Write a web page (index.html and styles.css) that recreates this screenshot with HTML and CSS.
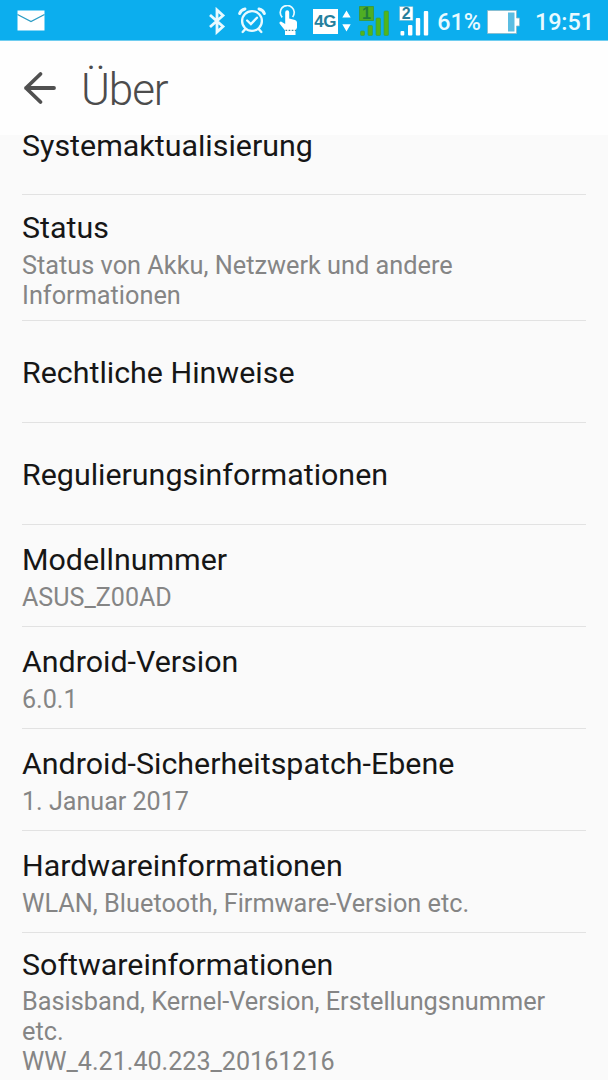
FILE: index.html
```html
<!DOCTYPE html>
<html lang="de">
<head>
  <meta charset="UTF-8">
  <title>Über</title>
  <link rel="stylesheet" href="styles.css">
</head>
<body>
  <div class="statusbar">
    <svg class="mail" width="28" height="21" viewBox="0 0 28 21">
      <path d="M0.5 0.5H27.5V20.5H0.5Z" fill="#fff"/>
      <path d="M0.5 4.5L14 11.5L27.5 4.5" fill="none" stroke="#2b9cc4" stroke-width="1.4"/>
    </svg>
    <div class="indicators">
      <svg class="bluetooth" width="18" height="28" viewBox="0 0 18 28">
        <path d="M2 8L15 19.5L9 25V3L15 8.5L2 20" fill="none" stroke="#e9faff" stroke-width="2.8"/>
      </svg>
      <svg class="alarm" width="28" height="27" viewBox="0 0 30 28">
        <g fill="none" stroke="#e9faff" stroke-width="2.5" stroke-linecap="round">
          <circle cx="15" cy="14.5" r="10.6"/>
          <path d="M9.8 14L13.8 17.8L20.3 11"/>
          <path d="M7.5 23.5L5 26.3M22.5 23.5L25 26.3"/>
          <path d="M1.8 6.5Q3 2.5 7.5 1.6M28.2 6.5Q27 2.5 22.5 1.6" stroke-width="3.2"/>
        </g>
      </svg>
      <svg class="touch" width="20" height="31" viewBox="0 0 20 31">
        <path d="M4.2 12.4A7 7 0 1 1 14.6 12" fill="none" stroke="#e9faff" stroke-width="1.7"/>
        <path d="M7.2 19V7.5Q7.2 5.3 9.2 5.3Q11.2 5.3 11.2 7.5V13.5L17 15Q19 15.6 19 17.6V22.5L17.5 26V30H7V25.5L1.5 18.5Q1 16.5 3 16.5L7.2 19Z" fill="#fff"/>
        <path d="M7.5 25.3H18" stroke="#438b9c" stroke-width="1.2" stroke-dasharray="1.7 1.4"/>
      </svg>
      <span class="network">4G</span>
      <svg class="updown" width="9" height="22" viewBox="0 0 9 22">
        <path d="M0.3 7.5L4.5 0.5L8.7 7.5ZM0.3 14.3H8.7L4.5 21.5Z" fill="#fff"/>
      </svg>
      <svg class="sim1" width="31" height="31" viewBox="0 0 31 31">
        <path d="M0.5 0.5H14.5V14.5H0.5Z" fill="#4fae23" stroke="#399b45"/>
        <text class="sim-no" x="7.5" y="13" fill="#227c3a">1</text>
        <g fill="#52b51a" stroke="#369f4a" stroke-width=".7">
          <rect x="1.5" y="25" width="4" height="4.5" rx="1"/>
          <rect x="9" y="19.5" width="4.5" height="10" rx="1"/>
          <rect x="17" y="12" width="4.5" height="17.5" rx="1"/>
          <rect x="25" y="5" width="4.5" height="24.5" rx="1"/>
        </g>
      </svg>
      <svg class="sim2" width="31" height="31" viewBox="0 0 31 31">
        <path d="M0.5 0.5H14V14.5H0.5Z" fill="#fff" stroke="#65b7d2" stroke-width=".6"/>
        <text class="sim-no" x="7.3" y="13" fill="#257f9d">2</text>
        <g fill="#fff">
          <rect x="1.5" y="25" width="3.8" height="4.5" rx="1"/>
          <rect x="9" y="19" width="4.4" height="10.5" rx="1"/>
          <rect x="16.8" y="12" width="4.4" height="17.5" rx="1"/>
          <rect x="24.8" y="5" width="4.4" height="24.5" rx="1"/>
        </g>
      </svg>
      <span class="percent">61%</span>
      <svg class="battery" width="34" height="24" viewBox="0 0 34 24">
        <path d="M0.5 0.5H29.5V8H32.5V16H29.5V23.5H0.5Z" fill="#fff" stroke="#8ab9c8" stroke-width=".8"/>
        <path d="M21 2.5H27.5V21.5H21Z" fill="#5bbde2"/>
      </svg>
      <span class="clock">19:51</span>
    </div>
  </div>

  <header class="header">
    <svg class="back" width="33" height="34" viewBox="0 0 33 34">
      <path d="M17.5 3L3 17L17.5 31M3 17H31" fill="none" stroke="#505050" stroke-width="3.8" stroke-linecap="round" stroke-linejoin="round"/>
    </svg>
    <h1>Über</h1>
  </header>

  <main class="list">
    <div class="item single scrolled">
      <div class="title">Systemaktualisierung</div>
    </div>
    <div class="item two-lines">
      <div class="title">Status</div>
      <div class="summary">Status von Akku, Netzwerk und andere Informationen</div>
    </div>
    <div class="item single">
      <div class="title">Rechtliche Hinweise</div>
    </div>
    <div class="item single">
      <div class="title">Regulierungsinformationen</div>
    </div>
    <div class="item">
      <div class="title">Modellnummer</div>
      <div class="summary"><span class="value">ASUS_Z00AD</span></div>
    </div>
    <div class="item">
      <div class="title">Android-Version</div>
      <div class="summary"><span class="value">6.0.1</span></div>
    </div>
    <div class="item">
      <div class="title">Android-Sicherheitspatch-Ebene</div>
      <div class="summary"><span class="value">1. Januar 2017</span></div>
    </div>
    <div class="item">
      <div class="title">Hardwareinformationen</div>
      <div class="summary">WLAN, Bluetooth, Firmware-Version etc.</div>
    </div>
    <div class="item last">
      <div class="title">Softwareinformationen</div>
      <div class="summary">Basisband, Kernel-Version, Erstellungsnummer etc.<br><span class="value">WW_4.21.40.223_20161216</span></div>
    </div>
  </main>
</body>
</html>
```
FILE: styles.css
```css
* {
  box-sizing: border-box;
}
body {
  margin: 0;
  height: 1080px;
  overflow: hidden;
  display: flex;
  flex-direction: column;
  background: #fafafa;
  font-family: Roboto, sans-serif;
}
svg {
  display: block;
  flex: none;
}

/* status bar */
.statusbar {
  display: flex;
  flex: none;
  justify-content: space-between;
  height: 41px;
  padding: 0 14px 0 17px;
  background: #0caeee;
  border-bottom: 1px solid #6fcdf0;
  color: #e9faff;
}
.mail {
  margin-top: 10px;
}
.indicators {
  display: flex;
  align-items: flex-start;
}
.bluetooth {
  margin: 7px 12px 0 0;
}
.alarm {
  margin: 7px 12px 0 0;
}
.touch {
  margin: 5px 15px 0 0;
}
.network {
  width: 25px;
  height: 25px;
  margin: 9px 4px 0 0;
  background: #fff;
  color: #257f9d;
  font-family: "Liberation Sans", sans-serif;
  font-size: 17px;
  font-weight: bold;
  letter-spacing: -0.3px;
  line-height: 26px;
  text-align: center;
}
.updown {
  margin: 10px 8px 0 0;
}
.sim1 {
  margin: 6px 9px 0 0;
}
.sim2 {
  margin: 6px 7.5px 0 0;
}
.sim-no {
  font-family: "Liberation Sans", sans-serif;
  font-size: 16px;
  font-weight: bold;
  text-anchor: middle;
}
.percent,
.clock {
  font-size: 23.3px;
  font-weight: 500;
  line-height: 28px;
  margin-top: 8px;
}
.battery {
  margin: 10px 14px 0 6px;
}

/* title bar */
.header {
  display: flex;
  flex: none;
  align-items: center;
  height: 94px;
  padding-left: 23px;
  background: #fefefe;
}
.header h1 {
  margin: 4px 0 0 25px;
  color: #4c4c4c;
  font-size: 44px;
  font-weight: 300;
  letter-spacing: -1.1px;
  line-height: 52px;
}

/* settings list */
.list {
  flex: 1;
  min-height: 0;
  overflow: hidden;
  padding: 0 22px;
}
.item {
  height: 102px;
  padding-top: 17px;
  border-bottom: 1px solid #e2e2e2;
}
.single {
  padding-top: 34px;
}
.scrolled {
  margin-top: -42px;
  padding-top: 35px;
}
.two-lines {
  height: 126px;
  padding-top: 15px;
}
.last {
  height: auto;
  padding-top: 14px;
  border-bottom: none;
}
.title {
  color: #161616;
  font-size: 30.4px;
  line-height: 36px;
}
.summary {
  margin-top: 5px;
  color: #858585;
  font-size: 25.3px;
  line-height: 30px;
}
.last .summary {
  margin-top: 4px;
}
.value {
  font-size: 25.1px;
}
```
